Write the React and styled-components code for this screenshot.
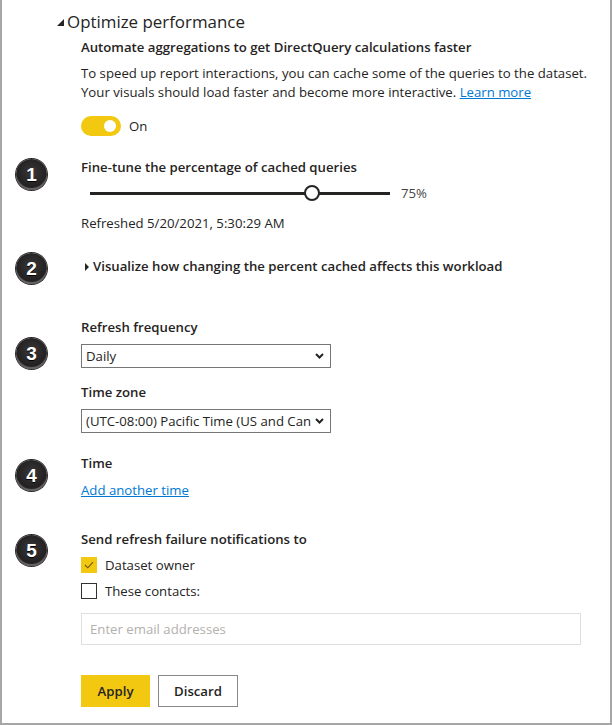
import React from "react";
import styled, { createGlobalStyle } from "styled-components";

const Global = createGlobalStyle`
  html, body { margin: 0; padding: 0; background: #fff; }
  body { font-family: "Open Sans", "Noto Sans", sans-serif; color: #252423; }
  * { box-sizing: border-box; }
`;

const Frame = styled.div`
  width: 612px;
  height: 725px;
  border-left: 2px solid #a6a6a6;
  border-right: 2px solid #a6a6a6;
  border-bottom: 2px solid #a6a6a6;
  padding-top: 10px;
  overflow: hidden;
`;

const Header = styled.div`
  display: flex;
  align-items: center;
  gap: 3px;
  padding-left: 55px;
  height: 24px;
  font-size: 16.9px;
  line-height: 24px;
  color: #252423;
`;

const Indent = styled.div`
  padding-left: 79px;
  padding-right: 16px;
  margin-top: ${(p) => p.$mt || 0}px;
`;

const Bold = styled.div`
  font-size: 13.2px;
  line-height: 19px;
  font-weight: 600;
  color: #252423;
  margin-top: ${(p) => p.$mt || 0}px;
`;

const Text = styled.div`
  font-size: 13.2px;
  line-height: 19px;
  color: ${(p) => p.$color || "#252423"};
  margin-top: ${(p) => p.$mt || 0}px;
`;

const Link = styled.a`
  color: #0078d4;
  text-decoration: underline;
  cursor: pointer;
`;

const ToggleRow = styled.div`
  display: flex;
  align-items: center;
  gap: 8px;
  margin-top: ${(p) => p.$mt || 0}px;
  font-size: 13.2px;
  line-height: 20px;
`;

const Toggle = styled.div`
  width: 40px;
  height: 20px;
  border-radius: 10px;
  background: #f2c811;
  display: flex;
  align-items: center;
  justify-content: flex-end;
  padding-right: 5px;
  &::after {
    content: "";
    width: 12px;
    height: 12px;
    border-radius: 50%;
    background: #fff;
  }
`;

const Section = styled.div`
  display: grid;
  grid-template-columns: 79px 1fr;
  margin-top: ${(p) => p.$mt || 0}px;
  padding-right: 29px;
`;

const Gutter = styled.div`
  padding-left: 14px;
`;

const Badge = styled.div`
  width: 31px;
  height: 31px;
  border-radius: 50%;
  margin-top: ${(p) => p.$mt || 0}px;
  margin-bottom: ${(p) => p.$mb || 0}px;
  background: radial-gradient(circle at 50% 42%, #3a3738 0%, #262324 55%, #161415 100%);
  box-shadow: inset 0 -2px 1px #6a6768, 0 0 0 1px #2a2728;
  color: #fff;
  display: flex;
  align-items: center;
  justify-content: center;
  font-family: "Liberation Sans", Arial, sans-serif;
  font-weight: 700;
  font-size: 19px;
  text-shadow: 0 1px 0 #000;
`;

const Content = styled.div`
  display: flex;
  flex-direction: column;
  align-items: flex-start;
`;

const SliderRow = styled.div`
  display: flex;
  align-items: center;
  height: 20px;
  margin-top: ${(p) => p.$mt || 0}px;
  padding-left: 9px;
  gap: 11px;
`;

const Track = styled.div`
  position: relative;
  width: 300px;
  height: 3px;
  background: #252423;
`;

const Thumb = styled.div`
  position: absolute;
  top: 50%;
  width: 16px;
  height: 16px;
  margin-left: -8px;
  margin-top: -8px;
  border-radius: 50%;
  background: #fff;
  border: 2px solid #252423;
`;

const SliderValue = styled.span`
  font-size: 13.2px;
  color: #484644;
`;

const Disclosure = styled.div`
  display: flex;
  align-items: center;
  gap: 4px;
  padding-left: 4px;
  font-size: 13.2px;
  line-height: 19px;
  font-weight: 600;
  margin-top: ${(p) => p.$mt || 0}px;
`;

const SelectBox = styled.div`
  position: relative;
  width: 250px;
  height: 24px;
  margin-top: ${(p) => p.$mt || 0}px;
  border: 1px solid #767676;
  background: #fff;
  padding: 0 19px 0 4px;
  font-size: 13.2px;
  line-height: 22px;
  color: #252423;
`;

const SelectText = styled.span`
  display: block;
  white-space: nowrap;
  overflow: hidden;
`;

const Chevron = styled.svg`
  position: absolute;
  right: 6px;
  top: 8px;
`;

const CheckRow = styled.div`
  display: flex;
  align-items: center;
  gap: 8px;
  height: 19px;
  font-size: 13.2px;
  margin-top: ${(p) => p.$mt || 0}px;
`;

const Box = styled.div`
  width: 16px;
  height: 16px;
  display: flex;
  align-items: center;
  justify-content: center;
  background: ${(p) => (p.$checked ? "#f2c811" : "#fff")};
  border: ${(p) => (p.$checked ? "none" : "1px solid #323130")};
`;

const EmailInput = styled.div`
  align-self: stretch;
  height: 32px;
  margin-top: ${(p) => p.$mt || 0}px;
  border: 1px solid #e1dfdd;
  padding-left: 8px;
  font-size: 13.2px;
  line-height: 30px;
  color: #b3b0ad;
`;

const ButtonRow = styled.div`
  display: flex;
  gap: 8px;
  margin-top: ${(p) => p.$mt || 0}px;
`;

const Button = styled.button`
  height: 32px;
  padding: 0;
  font-family: "Open Sans", sans-serif;
  font-size: 13.2px;
  font-weight: 600;
  color: #252423;
  background: ${(p) => (p.$primary ? "#f2c811" : "#fff")};
  border: ${(p) => (p.$primary ? "1px solid #f2c811" : "1px solid #8a8886")};
  border-radius: 0;
  width: ${(p) => p.$w}px;
`;

const ChevronIcon = () => (
  <Chevron width="9" height="6" viewBox="0 0 9 6">
    <path d="M1 1 L4.5 4.5 L8 1" fill="none" stroke="#252423" strokeWidth="2" />
  </Chevron>
);

export default function App() {
  return (
    <>
      <Global />
      <Frame>
        <Header>
          <svg width="7" height="7" viewBox="0 0 7 7">
            <polygon points="0,7 7,7 7,0" fill="#252423" />
          </svg>
          <span>Optimize performance</span>
        </Header>
        <Indent>
          <Bold $mt={4}>Automate aggregations to get DirectQuery calculations faster</Bold>
          <Text $mt={7}>
            To speed up report interactions, you can cache some of the queries to the dataset.
            <br />
            Your visuals should load faster and become more interactive. <Link>Learn more</Link>
          </Text>
          <ToggleRow $mt={14}>
            <Toggle />
            <span>On</span>
          </ToggleRow>
        </Indent>

        <Section $mt={22}>
          <Gutter>
            <Badge $mt={1}>1</Badge>
          </Gutter>
          <Content>
            <Bold>Fine-tune the percentage of cached queries</Bold>
            <SliderRow $mt={6}>
              <Track>
                <Thumb style={{ left: "74%" }} />
              </Track>
              <SliderValue>75%</SliderValue>
            </SliderRow>
            <Text $mt={11}>Refreshed 5/20/2021, 5:30:29 AM</Text>
          </Content>
        </Section>

        <Section $mt={24}>
          <Gutter>
            <Badge $mt={-4} $mb={-8}>2</Badge>
          </Gutter>
          <Content>
            <Disclosure>
              <svg width="4" height="8" viewBox="0 0 4 8">
                <polygon points="0,0 4,4 0,8" fill="#252423" />
              </svg>
              <span>Visualize how changing the percent cached affects this workload</span>
            </Disclosure>
          </Content>
        </Section>

        <Section $mt={42}>
          <Gutter>
            <Badge $mt={20}>3</Badge>
          </Gutter>
          <Content>
            <Bold>Refresh frequency</Bold>
            <SelectBox $mt={7}>
              <SelectText>Daily</SelectText>
              <ChevronIcon />
            </SelectBox>
            <Bold $mt={15}>Time zone</Bold>
            <SelectBox $mt={7}>
              <SelectText>(UTC-08:00) Pacific Time (US and Canada)</SelectText>
              <ChevronIcon />
            </SelectBox>
          </Content>
        </Section>

        <Section $mt={21}>
          <Gutter>
            <Badge $mt={6}>4</Badge>
          </Gutter>
          <Content>
            <Bold>Time</Bold>
            <Text $mt={8}>
              <Link>Add another time</Link>
            </Text>
          </Content>
        </Section>

        <Section $mt={30}>
          <Gutter>
            <Badge $mt={5}>5</Badge>
          </Gutter>
          <Content>
            <Bold>Send refresh failure notifications to</Bold>
            <CheckRow $mt={6}>
              <Box $checked>
                <svg width="10" height="8" viewBox="0 0 10 8">
                  <path d="M1 4 L3.8 6.8 L9 1.2" fill="none" stroke="#6b5a10" strokeWidth="1.1" />
                </svg>
              </Box>
              <span>Dataset owner</span>
            </CheckRow>
            <CheckRow $mt={7}>
              <Box />
              <span>These contacts:</span>
            </CheckRow>
            <EmailInput $mt={13}>Enter email addresses</EmailInput>
            <ButtonRow $mt={30}>
              <Button $primary $w={69}>Apply</Button>
              <Button $w={80}>Discard</Button>
            </ButtonRow>
          </Content>
        </Section>
      </Frame>
    </>
  );
}
